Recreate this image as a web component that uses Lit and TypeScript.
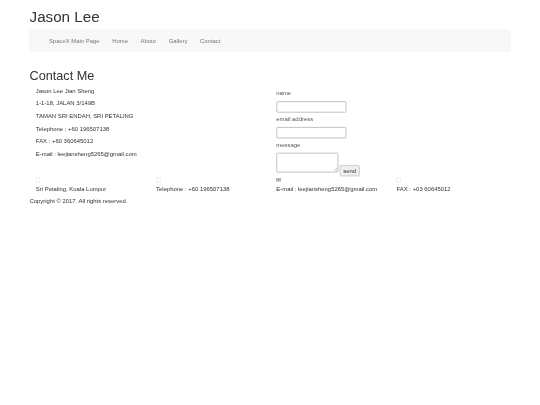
import { LitElement, html, css } from "lit";
import { customElement } from "lit/decorators.js";

@customElement("app-root")
export class AppRoot extends LitElement {
  static styles = css`
    :host { display: block; width: 540px; height: 405px; overflow: hidden; background: #fff; }
    .page { width: 1280px; height: 960px; transform: scale(0.421875); transform-origin: 0 0; filter: blur(0.6px);
      font-family: "Liberation Sans", Arial, sans-serif; font-size: 14px; line-height: 20px; color: #333;
      display: flow-root; }
    .container { width: 1140px; margin: 0 auto; }
    h1, h2 { font-weight: 500; line-height: 1.1; color: #333; margin: 20px 0 10px; }
    h1 { font-size: 36px; }
    h2 { font-size: 30px; margin-top: 0; }
    nav { height: 52px; box-sizing: border-box; border: 1px solid #eeeeee; border-radius: 4px; background: #f8f8f8;
      margin-bottom: 40px; display: flex; padding-left: 30px; }
    nav a { color: #777; padding: 15px; text-decoration: none; }
    .main { display: grid; grid-template-columns: 570px 570px; height: 212.4px; }
    .info { padding: 0 15px; }
    .info p { margin: 0 0 10px; }
    form { padding: 6px 15px 0; display: flex; flex-direction: column; align-items: flex-start; }
    label { display: block; color: #555; height: 20px; margin-bottom: 9px; }
    input { box-sizing: border-box; width: 166px; height: 27px; border: 2px solid #b8b8b8; border-radius: 3px;
      background: #fff; margin: 0 0 5px; padding: 1px 2px; display: block; }
    .send { display: flex; align-items: flex-end; gap: 3px; }
    textarea { box-sizing: border-box; width: 147px; height: 47px; border: 2px solid #b8b8b8; border-radius: 3px;
      background: #fff; margin: 0; padding: 2px; display: block; }
    button { box-sizing: border-box; width: 48px; height: 27px; padding: 0; border: 2px solid #c8c8c8; border-radius: 3px;
      background: #efefef; color: #333; font: 14px "Liberation Sans", Arial, sans-serif; margin-bottom: -9px; }
    .foot { display: grid; grid-template-columns: repeat(4, 285px); }
    .foot > div { padding: 0 15px; }
    .ico { height: 20px; display: flex; align-items: center; font-size: 14px; color: #333; }
    .tofu { box-sizing: border-box; width: 10px; height: 13px; border: 1px solid #ddd; }
    .copy { margin: 10px 0 0; }
  `;

  render() {
    const foot = [
      { icon: "", text: "Sri Petaling, Kuala Lumpur" },
      { icon: "", text: "Telephone : +60 196507138" },
      { icon: "✉", text: "E-mail : leejiansheng5265@gmail.com" },
      { icon: "", text: "FAX : +03 60645012" },
    ];
    return html`
      <div class="page">
        <div class="container">
          <h1>Jason Lee</h1>
          <nav>
            ${["SpaceX Main Page", "Home", "About", "Gallery", "Contact"].map((t) => html`<a href="#">${t}</a>`)}
          </nav>
          <h2>Contact Me</h2>
          <div class="main">
            <div class="info">
              <p>Jason Lee Jian Sheng</p>
              <p>1-1-18, JALAN 3/149B</p>
              <p>TAMAN SRI ENDAH, SRI PETALING</p>
              <p>Telephone : +60 196507138</p>
              <p>FAX : +60 360645012</p>
              <p>E-mail : leejiansheng5265@gmail.com</p>
            </div>
            <form @submit=${(e: Event) => e.preventDefault()}>
              <label>name</label>
              <input type="text" />
              <label>email address</label>
              <input type="text" />
              <label>message</label>
              <div class="send">
                <textarea></textarea>
                <button>send</button>
              </div>
            </form>
          </div>
          <div class="foot">
            ${foot.map(
              (f) => html`<div>
                <div class="ico">${f.icon ? f.icon : html`<span class="tofu"></span>`}</div>
                <div>${f.text}</div>
              </div>`
            )}
          </div>
          <p class="copy">Copyright © 2017. All rights reserved.</p>
        </div>
      </div>
    `;
  }
}
